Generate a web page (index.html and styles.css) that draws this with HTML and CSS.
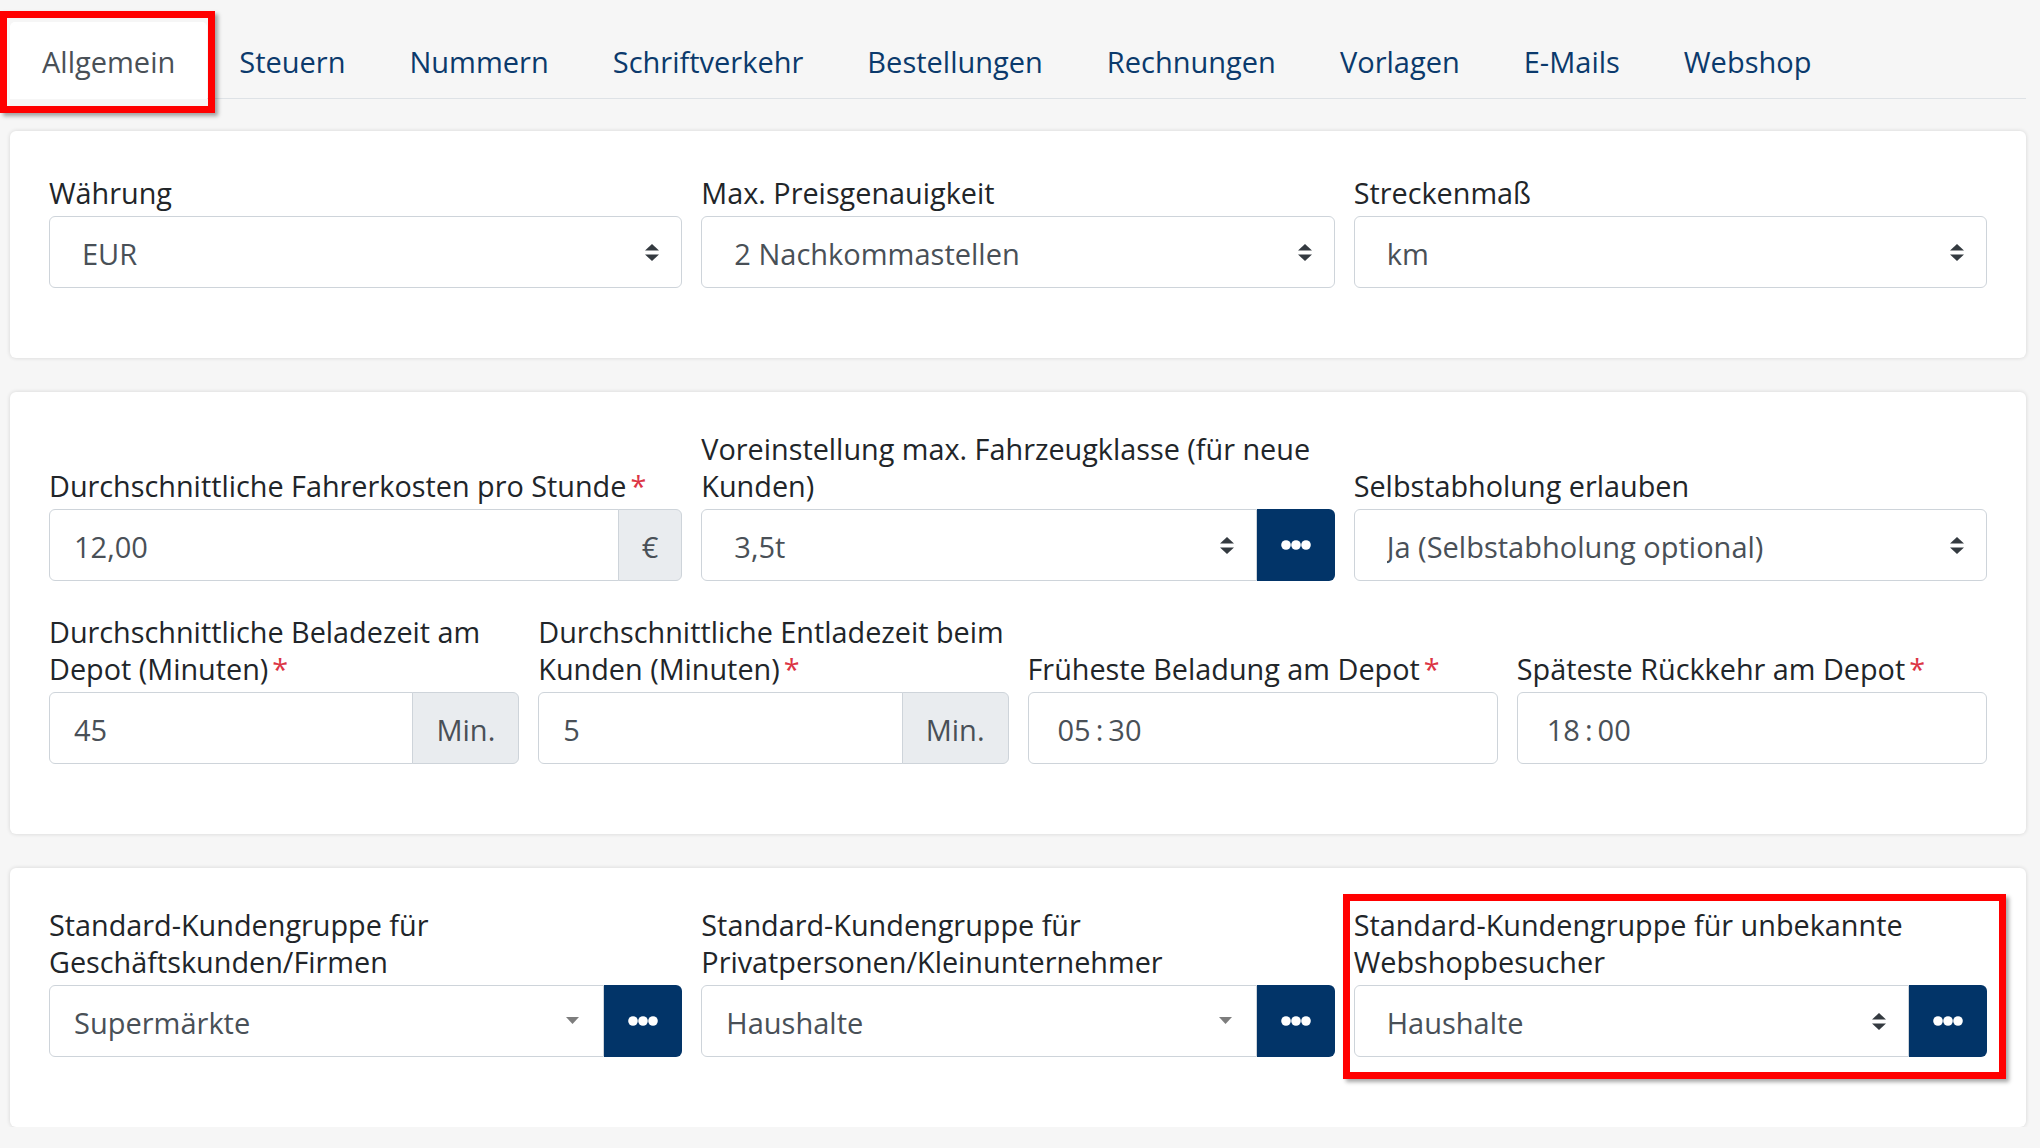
FILE: index.html
```html
<!DOCTYPE html>
<html lang="de">
<head>
<meta charset="utf-8">
<title>Einstellungen</title>
<link rel="stylesheet" href="styles.css">
</head>
<body>
<div class="page">
  <nav class="tabs">
    <a class="tab active">Allgemein<span class="mark mark-tab"></span></a>
    <a class="tab">Steuern</a>
    <a class="tab">Nummern</a>
    <a class="tab">Schriftverkehr</a>
    <a class="tab">Bestellungen</a>
    <a class="tab">Rechnungen</a>
    <a class="tab">Vorlagen</a>
    <a class="tab">E-Mails</a>
    <a class="tab">Webshop</a>
  </nav>

  <section class="card card-first">
    <div class="row row3">
      <div class="field">
        <label class="lbl">Währung</label>
        <div class="ctrl native"><span class="val">EUR</span><svg class="updown" viewBox="0 0 14 17"><polygon points="0,6.5 7,0 14,6.5"/><polygon points="0,10.5 14,10.5 7,17"/></svg></div>
      </div>
      <div class="field">
        <label class="lbl">Max. Preisgenauigkeit</label>
        <div class="ctrl native"><span class="val">2 Nachkommastellen</span><svg class="updown" viewBox="0 0 14 17"><polygon points="0,6.5 7,0 14,6.5"/><polygon points="0,10.5 14,10.5 7,17"/></svg></div>
      </div>
      <div class="field">
        <label class="lbl">Streckenmaß</label>
        <div class="ctrl native"><span class="val">km</span><svg class="updown" viewBox="0 0 14 17"><polygon points="0,6.5 7,0 14,6.5"/><polygon points="0,10.5 14,10.5 7,17"/></svg></div>
      </div>
    </div>
  </section>

  <section class="card">
    <div class="row row3">
      <div class="field">
        <label class="lbl">Durchschnittliche Fahrerkosten pro Stunde<span class="req">*</span></label>
        <div class="group">
          <div class="ctrl text"><span class="val">12,00</span></div>
          <div class="addon">€</div>
        </div>
      </div>
      <div class="field">
        <label class="lbl">Voreinstellung max. Fahrzeugklasse (für neue Kunden)</label>
        <div class="group">
          <div class="ctrl native"><span class="val">3,5t</span><svg class="updown" viewBox="0 0 14 17"><polygon points="0,6.5 7,0 14,6.5"/><polygon points="0,10.5 14,10.5 7,17"/></svg></div>
          <button class="dots"><svg viewBox="0 0 30 10"><circle cx="5" cy="5" r="4.8"/><circle cx="15" cy="5" r="4.8"/><circle cx="25" cy="5" r="4.8"/></svg></button>
        </div>
      </div>
      <div class="field">
        <label class="lbl">Selbstabholung erlauben</label>
        <div class="ctrl native"><span class="val">Ja (Selbstabholung optional)</span><svg class="updown" viewBox="0 0 14 17"><polygon points="0,6.5 7,0 14,6.5"/><polygon points="0,10.5 14,10.5 7,17"/></svg></div>
      </div>
    </div>
    <div class="row row4">
      <div class="field">
        <label class="lbl">Durchschnittliche Beladezeit am Depot (Minuten)<span class="req">*</span></label>
        <div class="group">
          <div class="ctrl text"><span class="val">45</span></div>
          <div class="addon">Min.</div>
        </div>
      </div>
      <div class="field">
        <label class="lbl">Durchschnittliche Entladezeit beim Kunden (Minuten)<span class="req">*</span></label>
        <div class="group">
          <div class="ctrl text"><span class="val">5</span></div>
          <div class="addon">Min.</div>
        </div>
      </div>
      <div class="field">
        <label class="lbl">Früheste Beladung am Depot<span class="req">*</span></label>
        <div class="ctrl time"><span class="val">05<span class="colon">:</span>30</span></div>
      </div>
      <div class="field">
        <label class="lbl">Späteste Rückkehr am Depot<span class="req">*</span></label>
        <div class="ctrl time"><span class="val">18<span class="colon">:</span>00</span></div>
      </div>
    </div>
  </section>

  <section class="card">
    <div class="row row3">
      <div class="field">
        <label class="lbl">Standard-Kundengruppe für Geschäftskunden/Firmen</label>
        <div class="group">
          <div class="ctrl custom"><span class="val">Supermärkte</span><svg class="caret" viewBox="0 0 13 7"><polygon points="0,0 13,0 6.5,7"/></svg></div>
          <button class="dots"><svg viewBox="0 0 30 10"><circle cx="5" cy="5" r="4.8"/><circle cx="15" cy="5" r="4.8"/><circle cx="25" cy="5" r="4.8"/></svg></button>
        </div>
      </div>
      <div class="field">
        <label class="lbl">Standard-Kundengruppe für Privatpersonen/Kleinunternehmer</label>
        <div class="group">
          <div class="ctrl custom"><span class="val">Haushalte</span><svg class="caret" viewBox="0 0 13 7"><polygon points="0,0 13,0 6.5,7"/></svg></div>
          <button class="dots"><svg viewBox="0 0 30 10"><circle cx="5" cy="5" r="4.8"/><circle cx="15" cy="5" r="4.8"/><circle cx="25" cy="5" r="4.8"/></svg></button>
        </div>
      </div>
      <div class="field marked">
        <label class="lbl">Standard-Kundengruppe für unbekannte Webshopbesucher</label>
        <div class="group">
          <div class="ctrl native"><span class="val">Haushalte</span><svg class="updown" viewBox="0 0 14 17"><polygon points="0,6.5 7,0 14,6.5"/><polygon points="0,10.5 14,10.5 7,17"/></svg></div>
          <button class="dots"><svg viewBox="0 0 30 10"><circle cx="5" cy="5" r="4.8"/><circle cx="15" cy="5" r="4.8"/><circle cx="25" cy="5" r="4.8"/></svg></button>
        </div>
        <span class="mark mark-field"></span>
      </div>
    </div>
  </section>
</div>
</body>
</html>
```

FILE: styles.css
```css
* { box-sizing: border-box; }

html, body {
  margin: 0;
  padding: 0;
  background: #f6f6f6;
  font-family: "Open Sans", "Noto Sans", "Liberation Sans", sans-serif;
  color: #212529;
}

.page {
  padding: 22px 14px 0 10px;
}

/* Tabs */
.tabs {
  display: flex;
  height: 77px;
  border-bottom: 1px solid #dee2e6;
}

.tab {
  position: relative;
  display: block;
  height: 76px;
  padding: 4px 32px 0;
  font-size: 29px;
  line-height: 72px;
  color: #0b3a6c;
  white-space: nowrap;
  text-decoration: none;
}

.tab.active {
  height: 77px;
  background: #fff;
  color: #495057;
  border-radius: 5px 5px 0 0;
}

/* Annotation marks */
.mark {
  position: absolute;
  border: 7px solid #ff0000;
  box-shadow: 3px 3px 4px rgba(0, 0, 0, 0.35);
  pointer-events: none;
}

.mark-tab {
  left: -10px;
  top: -11px;
  right: -8px;
  bottom: -14px;
}

.mark-field {
  left: -11px;
  top: -12px;
  right: -19px;
  bottom: -22px;
}

/* Cards */
.card {
  background: #fff;
  border-radius: 6px;
  box-shadow: 0 0 4px rgba(0, 0, 0, 0.14);
  padding: 38px 39px 38px;
  margin-top: 34px;
}

.card-first {
  margin-top: 32px;
  padding-top: 43px;
}

.row {
  display: grid;
  align-items: end;
  margin-bottom: 32px;
}

.row3 {
  grid-template-columns: repeat(3, minmax(0, 1fr));
  column-gap: 19px;
}

.row4 {
  grid-template-columns: repeat(4, minmax(0, 1fr));
  column-gap: 19px;
}

.field {
  position: relative;
  min-width: 0;
}

.lbl {
  display: block;
  font-size: 28.8px;
  line-height: 37px;
  margin-bottom: 5px;
  color: #212529;
}

.req {
  color: #dc3545;
  margin-left: 4px;
}

/* Controls */
.ctrl {
  height: 72px;
  display: flex;
  align-items: center;
  padding-top: 3px;
  border: 1px solid #ced4da;
  border-radius: 6px;
  background: #fff;
  font-size: 29px;
  color: #495057;
  white-space: nowrap;
}

.ctrl .val {
  flex: 1;
  min-width: 0;
  overflow: hidden;
}

.ctrl.native {
  padding-left: 32px;
  padding-right: 22px;
}

.ctrl.text {
  padding-left: 24px;
  padding-right: 24px;
}

.ctrl.custom {
  padding-left: 24px;
  padding-right: 24px;
}

.ctrl.time {
  padding-left: 29px;
}

.colon {
  margin: 0 5px;
}

.updown {
  width: 14px;
  height: 17px;
  margin-top: -3px;
  fill: #343a40;
  flex: none;
}

.caret {
  width: 13px;
  height: 7px;
  margin-top: -5px;
  fill: #7d7d7d;
  flex: none;
}

.group {
  display: flex;
  height: 72px;
}

.group .ctrl {
  flex: 1;
  min-width: 0;
  border-radius: 6px 0 0 6px;
}

.addon {
  display: flex;
  align-items: center;
  padding: 3px 23px 0;
  margin-left: -1px;
  background: #e9ecef;
  border: 1px solid #ced4da;
  border-radius: 0 6px 6px 0;
  font-size: 29px;
  color: #495057;
}

.dots {
  flex: none;
  width: 78px;
  height: 72px;
  border: none;
  padding: 0;
  background: #023468;
  border-radius: 0 6px 6px 0;
  display: flex;
  align-items: center;
  justify-content: center;
}

.dots svg {
  width: 30px;
  height: 10px;
  fill: #fff;
}
```
